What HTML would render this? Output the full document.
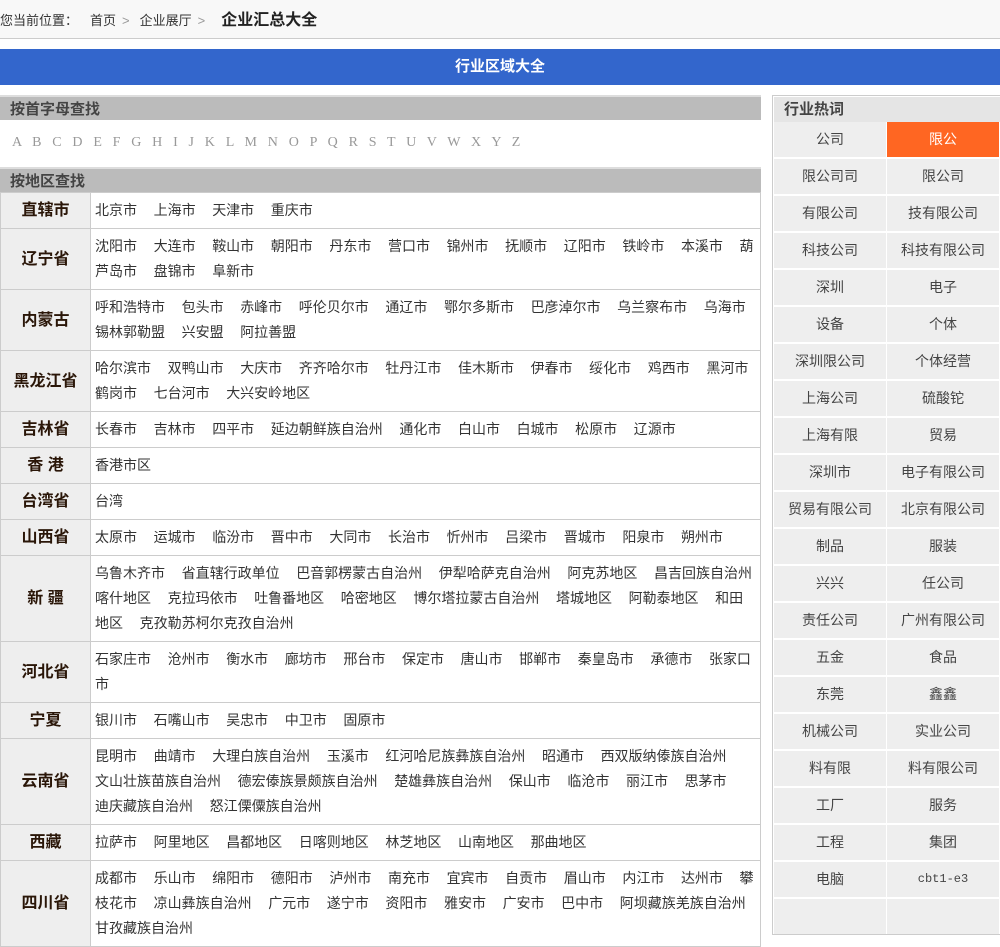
<!DOCTYPE html>
<html><head><meta charset="utf-8"><style>
*{margin:0;padding:0;box-sizing:border-box}
body{width:1000px;height:909px;overflow:hidden;background:#fff;font-family:"Liberation Sans","Noto Sans CJK SC",sans-serif;font-size:14px;color:#333}
.crumb{height:39px;background:#f8f8f8;border-bottom:1px solid #ccc;line-height:42px;font-size:13px;color:#333}
.crumb b{font-size:16px;margin-left:6px;color:#222}
.crumb .g{color:#999;margin:0 10px 0 6px}
.bar{position:absolute;top:49px;left:0;width:1000px;height:36px;background:#3366cc;color:#fff;font-weight:bold;font-size:15px;text-align:center;line-height:36px}
.left{position:absolute;left:0;top:95px;width:761px}
.hd{border-top:2px solid #ddd;background:#bbb;height:25px;line-height:26px;font-weight:bold;color:#444;font-size:15px;padding-left:10px}
.letters{height:47px;line-height:46px;padding-left:12px;font-family:"Liberation Serif",serif;color:#999;font-size:14px;word-spacing:7.3px}
table{border-collapse:collapse;width:761px;table-layout:fixed}
td{border:1px solid #ccc;padding:5px 0 5px 4px;line-height:25px;vertical-align:middle;white-space:nowrap;overflow:hidden}
td.l{width:90px;background:#eee;text-align:center;font-weight:bold;font-size:16px;color:#2a1608;padding:0}
td span{margin-right:16.6px}
.right{position:absolute;left:772px;top:95px;width:228px;border:1px solid #ccc;border-right:none;background:#fff;padding:1px 0 0 1px}
.rh{height:25px;line-height:26px;background:#e5e5e5;font-weight:bold;font-size:15px;color:#444;padding-left:10px}
.grid{display:grid;grid-template-columns:112px 112px;gap:2px 1px}
.grid div{height:35px;line-height:35px;text-align:center;background:#eee;color:#444}
.grid .o{background:#ff6622;color:#fff}
</style></head><body>
<div class="crumb">您当前位置：<span style="margin-left:12px">首页</span><span class="g">&gt;</span>企业展厅<span class="g">&gt;</span><b>企业汇总大全</b></div>
<div class="bar">行业区域大全</div>
<div class="left">
<div class="hd">按首字母查找</div>
<div class="letters">A B C D E F G H I J K L M N O P Q R S T U V W X Y Z</div>
<div class="hd">按地区查找</div>
<table>
<tr><td class="l">直辖市</td><td><span>北京市</span><span>上海市</span><span>天津市</span><span>重庆市</span></td></tr>
<tr><td class="l">辽宁省</td><td><span>沈阳市</span><span>大连市</span><span>鞍山市</span><span>朝阳市</span><span>丹东市</span><span>营口市</span><span>锦州市</span><span>抚顺市</span><span>辽阳市</span><span>铁岭市</span><span>本溪市</span><span>葫<br>芦岛市</span><span>盘锦市</span><span>阜新市</span></td></tr>
<tr><td class="l">内蒙古</td><td><span>呼和浩特市</span><span>包头市</span><span>赤峰市</span><span>呼伦贝尔市</span><span>通辽市</span><span>鄂尔多斯市</span><span>巴彦淖尔市</span><span>乌兰察布市</span><span>乌海市</span><br><span>锡林郭勒盟</span><span>兴安盟</span><span>阿拉善盟</span></td></tr>
<tr><td class="l">黑龙江省</td><td><span>哈尔滨市</span><span>双鸭山市</span><span>大庆市</span><span>齐齐哈尔市</span><span>牡丹江市</span><span>佳木斯市</span><span>伊春市</span><span>绥化市</span><span>鸡西市</span><span>黑河市</span><br><span>鹤岗市</span><span>七台河市</span><span>大兴安岭地区</span></td></tr>
<tr><td class="l">吉林省</td><td><span>长春市</span><span>吉林市</span><span>四平市</span><span>延边朝鲜族自治州</span><span>通化市</span><span>白山市</span><span>白城市</span><span>松原市</span><span>辽源市</span></td></tr>
<tr><td class="l">香 港</td><td><span>香港市区</span></td></tr>
<tr><td class="l">台湾省</td><td><span>台湾</span></td></tr>
<tr><td class="l">山西省</td><td><span>太原市</span><span>运城市</span><span>临汾市</span><span>晋中市</span><span>大同市</span><span>长治市</span><span>忻州市</span><span>吕梁市</span><span>晋城市</span><span>阳泉市</span><span>朔州市</span></td></tr>
<tr><td class="l">新 疆</td><td><span>乌鲁木齐市</span><span>省直辖行政单位</span><span>巴音郭楞蒙古自治州</span><span>伊犁哈萨克自治州</span><span>阿克苏地区</span><span>昌吉回族自治州</span><br><span>喀什地区</span><span>克拉玛依市</span><span>吐鲁番地区</span><span>哈密地区</span><span>博尔塔拉蒙古自治州</span><span>塔城地区</span><span>阿勒泰地区</span><span>和田<br>地区</span><span>克孜勒苏柯尔克孜自治州</span></td></tr>
<tr><td class="l">河北省</td><td><span>石家庄市</span><span>沧州市</span><span>衡水市</span><span>廊坊市</span><span>邢台市</span><span>保定市</span><span>唐山市</span><span>邯郸市</span><span>秦皇岛市</span><span>承德市</span><span>张家口<br>市</span></td></tr>
<tr><td class="l">宁夏</td><td><span>银川市</span><span>石嘴山市</span><span>吴忠市</span><span>中卫市</span><span>固原市</span></td></tr>
<tr><td class="l">云南省</td><td><span>昆明市</span><span>曲靖市</span><span>大理白族自治州</span><span>玉溪市</span><span>红河哈尼族彝族自治州</span><span>昭通市</span><span>西双版纳傣族自治州</span><br><span>文山壮族苗族自治州</span><span>德宏傣族景颇族自治州</span><span>楚雄彝族自治州</span><span>保山市</span><span>临沧市</span><span>丽江市</span><span>思茅市</span><br><span>迪庆藏族自治州</span><span>怒江傈僳族自治州</span></td></tr>
<tr><td class="l">西藏</td><td><span>拉萨市</span><span>阿里地区</span><span>昌都地区</span><span>日喀则地区</span><span>林芝地区</span><span>山南地区</span><span>那曲地区</span></td></tr>
<tr><td class="l">四川省</td><td><span>成都市</span><span>乐山市</span><span>绵阳市</span><span>德阳市</span><span>泸州市</span><span>南充市</span><span>宜宾市</span><span>自贡市</span><span>眉山市</span><span>内江市</span><span>达州市</span><span>攀<br>枝花市</span><span>凉山彝族自治州</span><span>广元市</span><span>遂宁市</span><span>资阳市</span><span>雅安市</span><span>广安市</span><span>巴中市</span><span>阿坝藏族羌族自治州</span><br><span>甘孜藏族自治州</span></td></tr>
</table>
</div>
<div class="right">
<div class="rh">行业热词</div>
<div class="grid">
<div>公司</div><div class="o">限公</div>
<div>限公司司</div><div>限公司</div>
<div>有限公司</div><div>技有限公司</div>
<div>科技公司</div><div>科技有限公司</div>
<div>深圳</div><div>电子</div>
<div>设备</div><div>个体</div>
<div>深圳限公司</div><div>个体经营</div>
<div>上海公司</div><div>硫酸铊</div>
<div>上海有限</div><div>贸易</div>
<div>深圳市</div><div>电子有限公司</div>
<div>贸易有限公司</div><div>北京有限公司</div>
<div>制品</div><div>服装</div>
<div>兴兴</div><div>任公司</div>
<div>责任公司</div><div>广州有限公司</div>
<div>五金</div><div>食品</div>
<div>东莞</div><div>鑫鑫</div>
<div>机械公司</div><div>实业公司</div>
<div>料有限</div><div>料有限公司</div>
<div>工厂</div><div>服务</div>
<div>工程</div><div>集团</div>
<div>电脑</div><div style="font-family:'Liberation Mono',monospace;font-size:12px">cbt1-e3</div>
<div></div><div></div>
</div>
</div>
</body></html>
